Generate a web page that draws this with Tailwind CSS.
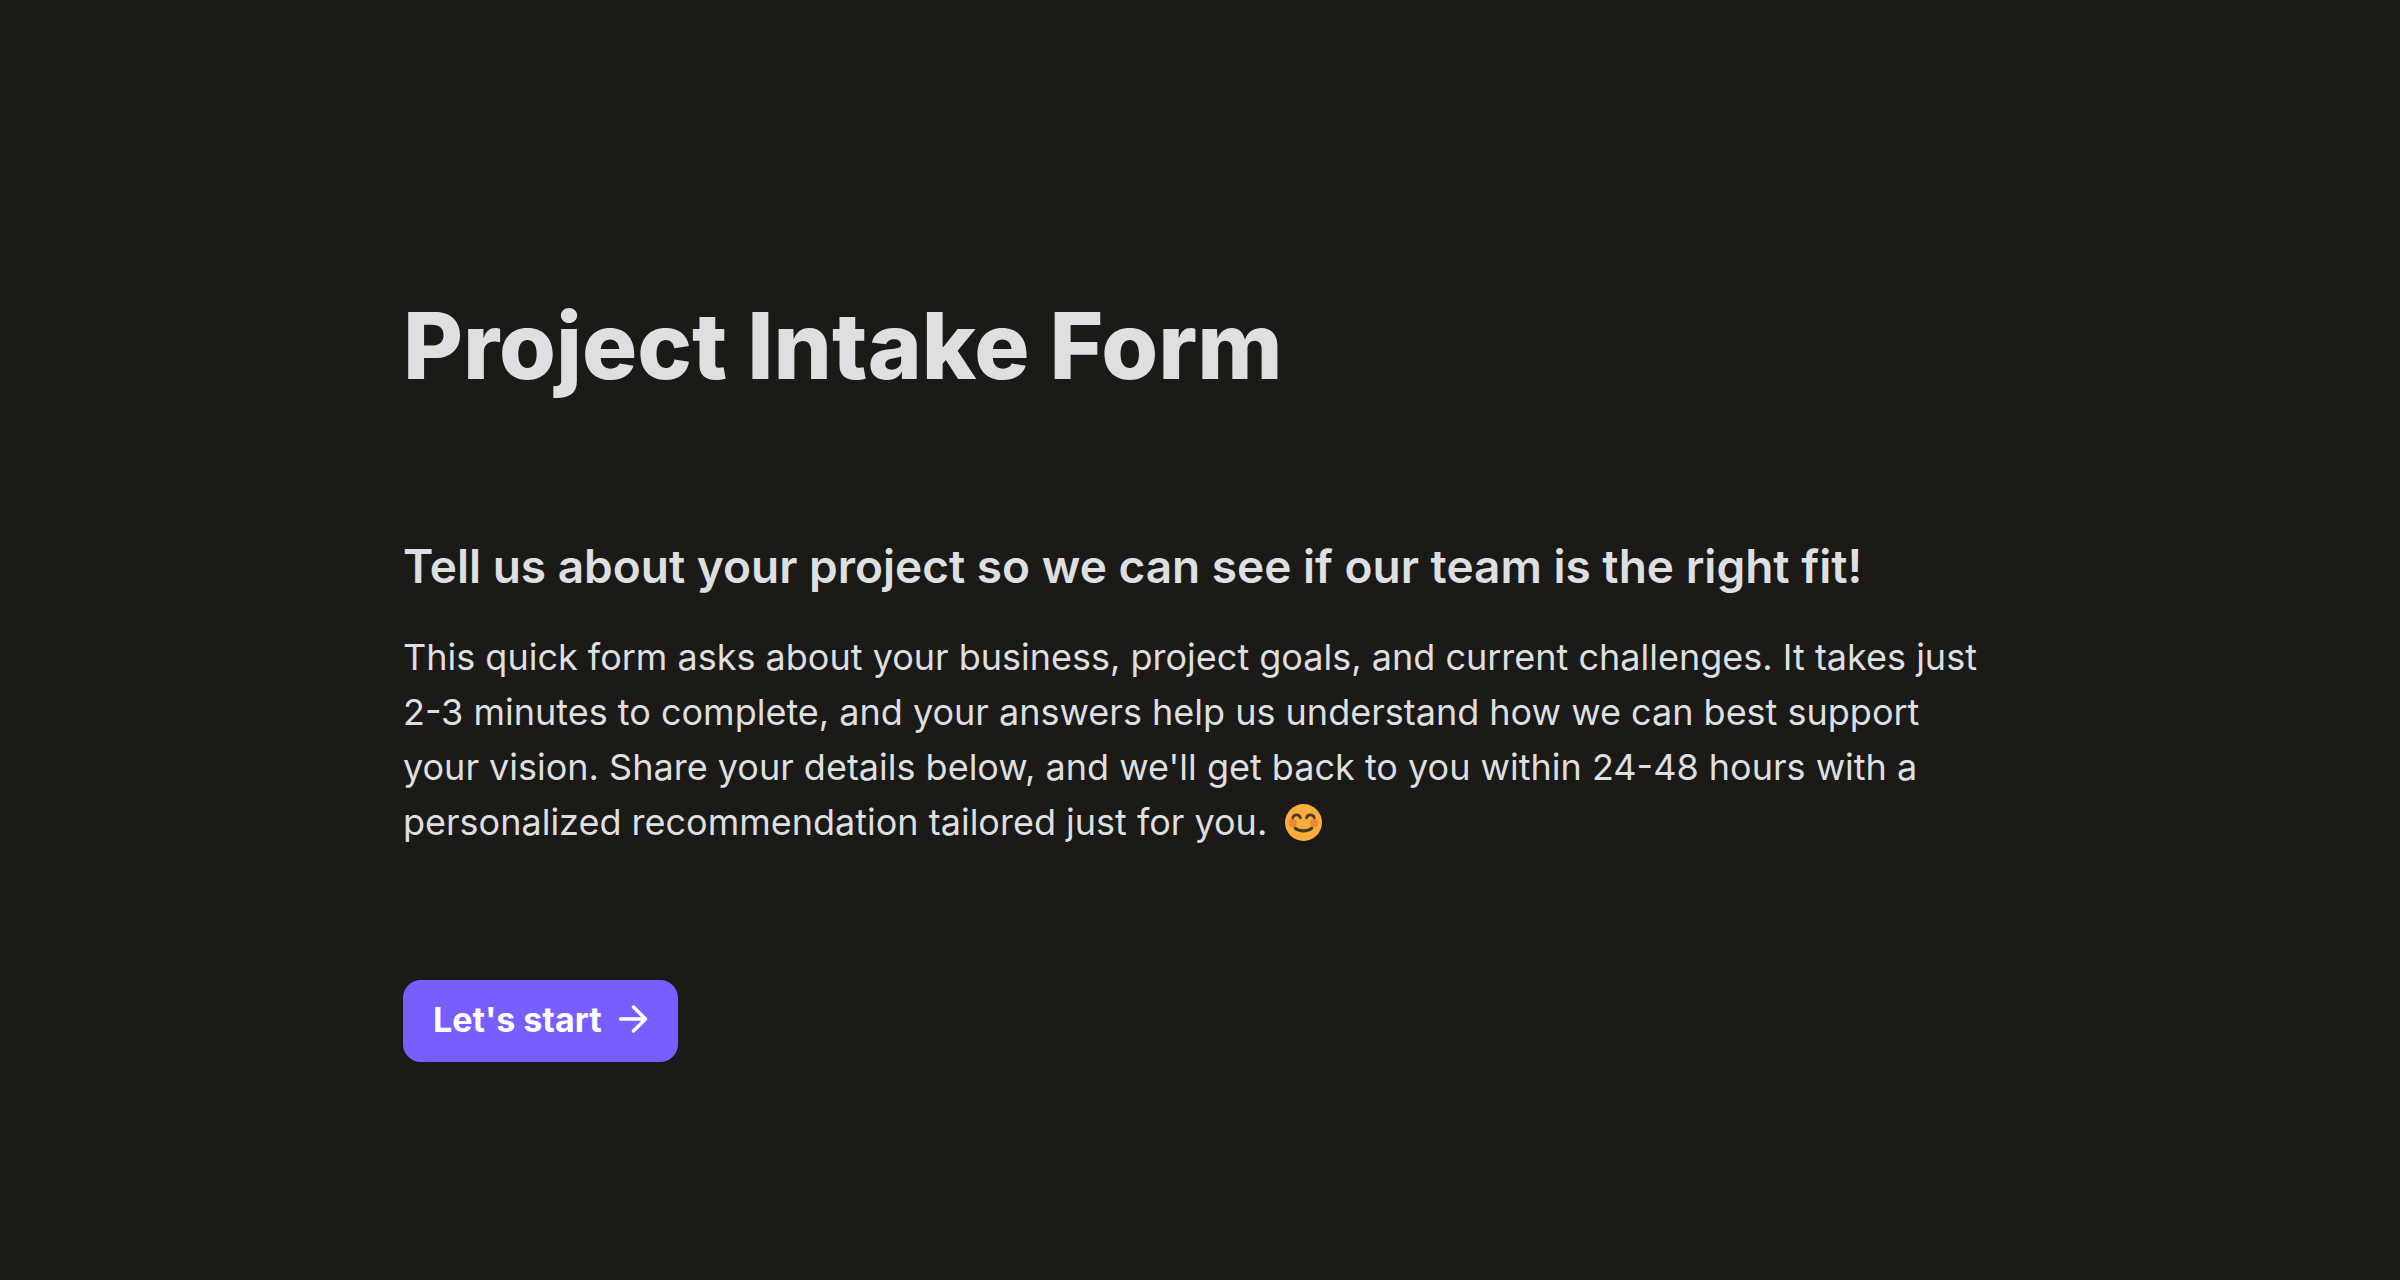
<!DOCTYPE html>
<html lang="en">
<head>
    <meta charset="UTF-8">
    <meta name="viewport" content="width=device-width, initial-scale=1.0">
    <title>Project Intake Form</title>
    <script src="https://cdn.jsdelivr.net/npm/@tailwindcss/browser@4"></script>
</head>
<body class="min-h-screen bg-[#1b1a17] font-['Inter',sans-serif] text-[#dddfe1]">

    <main class="mx-auto max-w-[1610px] px-2 pt-[290px] pb-16">
        <h1 class="text-[92px] leading-[112px] font-extrabold">Project Intake Form</h1>

        <!-- Intro -->
        <section class="mt-[136px]">
            <h2 class="text-[46px] leading-[56px] font-semibold">Tell us about your project so we can see if our team is the right fit!</h2>
            <p class="mt-9 text-[36px] leading-[55px]">
                This quick form asks about your business, project goals, and current challenges. It takes just 2-3 minutes to complete, and your answers help us understand how we can best support your vision. Share your details below, and we'll get back to you within 24-48 hours with a personalized recommendation tailored just for you.
                <svg class="ml-2 inline-block size-[37px] align-[-6px]" viewBox="0 0 36 36" role="img" aria-label="Smiling face">
                    <circle cx="18" cy="18" r="18" fill="#f7ae3c"/>
                    <circle cx="7.500" cy="18.500" r="4" fill="#ef8738"/>
                    <circle cx="28.500" cy="18.500" r="4" fill="#ef8738"/>
                    <path d="M7.500 13.500c1-4 6.500-4 7.500 0M21 13.500c1-4 6.500-4 7.500 0" fill="none" stroke="#4a3a2a" stroke-width="2.600" stroke-linecap="round"/>
                    <path d="M10 23.500c3.500 3.500 12.500 3.500 16 0" fill="none" stroke="#4a3a2a" stroke-width="3" stroke-linecap="round"/>
                </svg>
            </p>
        </section>

        <button type="button" class="mt-[130px] flex h-[82px] items-center gap-4 rounded-[18px] bg-[#775eff] px-[30px] pb-1 text-[34px] font-bold text-white hover:bg-[#6a50f5]">
            Let's start
            <svg class="size-[30px]" viewBox="0 0 30 30" fill="none" stroke="currentColor" stroke-width="3.500" stroke-linecap="round" stroke-linejoin="round" aria-hidden="true">
                <path d="M2.500 15h25M15.500 3l12 12-12 12"/>
            </svg>
        </button>
    </main>

</body>
</html>
